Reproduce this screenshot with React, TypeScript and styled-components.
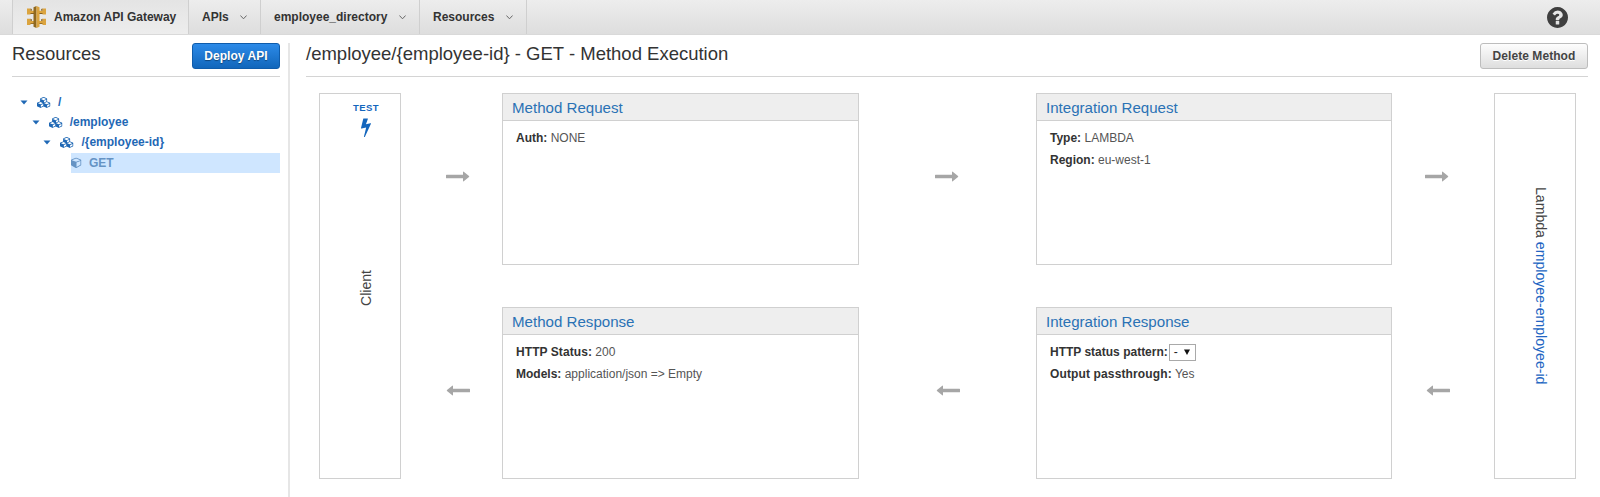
import React from "react";
import styled, { createGlobalStyle } from "styled-components";

const GlobalStyle = createGlobalStyle`
  *, *::before, *::after { box-sizing: border-box; }
  html, body { margin: 0; padding: 0; background: #fff; }
  body {
    font-family: "Liberation Sans", Arial, Helvetica, sans-serif;
    font-size: 12px;
    line-height: 16px;
    color: #444;
    overflow: hidden;
  }
`;

const Page = styled.div`
  display: flex;
  flex-direction: column;
  width: 1600px;
  height: 497px;
`;

const NavBar = styled.nav`
  display: flex;
  flex: none;
  height: 35px;
  padding-left: 12px;
  background: linear-gradient(#ededed, #dedede 97%);
  border-bottom: 1px solid #d9d9d9;
`;

const NavItem = styled.div<{ $width: number; $active?: boolean }>`
  display: flex;
  align-items: center;
  justify-content: space-between;
  width: ${(p) => p.$width}px;
  padding: ${(p) => (p.$active ? "0 12px 0 14px" : "0 13px")};
  border-right: 1px solid #cfcfcf;
  border-left: ${(p) => (p.$active ? "1px solid #cfcfcf" : "none")};
  background: ${(p) => (p.$active ? "linear-gradient(#e4e4e4, #ededed)" : "none")};
  font-weight: bold;
  color: #333;
  white-space: nowrap;
`;

const HelpSlot = styled.div`
  display: flex;
  align-items: center;
  margin-left: auto;
  padding-right: 32px;
  color: #3f3f3f;
`;

const Body = styled.div`
  display: flex;
  flex: 1;
  padding: 8px 12px 0;
`;

const Sidebar = styled.aside`
  width: 278px;
  padding-right: 8px;
  border-right: 2px solid #e6e6e6;
`;

const Main = styled.main`
  flex: 1;
  padding-left: 16px;
`;

const PageHeader = styled.header`
  display: flex;
  justify-content: space-between;
  height: 34px;
  border-bottom: 1px solid #d4d4d4;
`;

const Title = styled.h1`
  margin: 0;
  font-size: 18.5px;
  font-weight: normal;
  line-height: 22px;
  color: #333;
  white-space: nowrap;
`;

const Button = styled.button<{ $primary?: boolean }>`
  height: 26px;
  width: ${(p) => (p.$primary ? 88 : 108)}px;
  padding: 0;
  border: 1px solid ${(p) => (p.$primary ? "#0f5cab" : "#bdbdbd")};
  border-radius: 3px;
  background: ${(p) =>
    p.$primary ? "linear-gradient(#2c8ae8, #1166bb)" : "linear-gradient(#fdfdfd, #dedede)"};
  color: ${(p) => (p.$primary ? "#fff" : "#444")};
  text-shadow: ${(p) => (p.$primary ? "0 1px 1px rgba(0,0,0,.4)" : "0 1px 0 #fff")};
  font: bold 12px/16px "Liberation Sans", Arial, sans-serif;
  letter-spacing: 0.06px;
`;

const Tree = styled.ul`
  list-style: none;
  margin: 15px 0 0;
  padding: 0;
  color: #1f68b5;
`;

const TreeRow = styled.li<{ $depth: number }>`
  display: flex;
  align-items: center;
  height: 20.2px;
  padding-left: ${(p) => 8 + p.$depth * 11.7}px;
  font-weight: bold;
`;

const TreeIcon = styled.span`
  display: flex;
  width: 21px;
`;

const CaretSlot = styled.span`
  display: flex;
  width: 17px;
`;

const SelectedRow = styled.li`
  display: flex;
  align-items: center;
  height: 20px;
  margin-left: 59px;
  background: #cfe6ff;
  color: #6593c4;
  font-weight: bold;
  gap: 7px;
`;

const Flow = styled.section`
  display: grid;
  grid-template-columns: 82px 101px 357px 177px 356px 102px 82px;
  grid-template-rows: 172px 172px;
  grid-template-areas:
    "client a1 request a2 integration a3 backend"
    "client b1 response b2 result b3 backend";
  row-gap: 42px;
  padding: 16px 0 0 13px;
`;

const Endpoint = styled.div<{ $area: string }>`
  grid-area: ${(p) => p.$area};
  display: flex;
  flex-direction: column;
  align-items: center;
  padding: 7px 0 0 12px;
  border: 1px solid #d0d0d0;
  font-size: 14px;
`;

const TestLink = styled.a`
  display: flex;
  flex-direction: column;
  align-items: center;
  gap: 2px;
  font-size: 9.5px;
  line-height: 14px;
  letter-spacing: 0.4px;
  font-weight: bold;
  color: #1466bd;
`;

const VerticalText = styled.div<{ $up?: boolean; $top: number }>`
  writing-mode: vertical-rl;
  transform: ${(p) => (p.$up ? "rotate(180deg)" : "none")};
  margin-top: ${(p) => p.$top}px;
  font-size: 14.1px;
  line-height: 16px;
  white-space: nowrap;
`;

const Link = styled.a`
  color: #2265c2;
`;

const ArrowCell = styled.div<{ $area: string; $left: number }>`
  grid-area: ${(p) => p.$area};
  display: flex;
  align-items: center;
  padding: 0 0 5px ${(p) => p.$left}px;
`;

const Panel = styled.article<{ $area: string }>`
  grid-area: ${(p) => p.$area};
  border: 1px solid #d0d0d0;
`;

const PanelTitle = styled.h2`
  height: 27px;
  margin: 0;
  padding-left: 9px;
  border-bottom: 1px solid #d0d0d0;
  background: #eee;
  font-size: 15.1px;
  font-weight: normal;
  line-height: 27px;
  color: #2a72b5;
`;

const Fields = styled.div`
  padding: 6px 13px;
`;

const Field = styled.div`
  display: flex;
  align-items: center;
  height: 22px;
  color: #555;
  white-space: pre;
`;

const FieldLabel = styled.b<{ $tracking: number }>`
  color: #333;
  letter-spacing: ${(p) => p.$tracking}px;
`;

const SelectBox = styled.span`
  display: flex;
  align-items: center;
  justify-content: space-between;
  width: 27px;
  height: 17px;
  margin-left: 1px;
  padding: 0 5px 0 4px;
  border: 1px solid #a9a9a9;
  background: #fff;
  color: #222;
`;

const Caret = () => (
  <svg width="8" height="5" viewBox="0 0 8 5"><path d="M.5.5h7L4 4.500z" fill="currentColor" /></svg>
);

const Chevron = () => (
  <svg width="7" height="5" viewBox="0 0 7 5"><path d="M.4.5 3.500 3.800 6.600.5" fill="none" stroke="#666" /></svg>
);

const Cubes = () => (
  <svg width="14" height="11" viewBox="0 0 2304 1792">
    <path fill="currentColor" d="M640 1632l384-192v-314l-384 164v342zm-64-454l404-173-404-173-404 173zm1088 454l384-192v-314l-384 164v342zm-64-454l404-173-404-173-404 173zm-448-293l384-165v-266l-384 164v267zm-64-379l441-189-441-189-441 189zm1088 518v416q0 36-19 67t-52 47l-448 224q-25 14-57 14t-57-14l-448-224q-4-2-7-4-2 2-7 4l-448 224q-25 14-57 14t-57-14l-448-224q-33-16-52-47t-19-67v-416q0-38 21.500-70t56.500-48l434-186v-400q0-38 21.500-70t56.500-48l448-192q23-10 50-10t50 10l448 192q35 16 56.500 48t21.500 70v400l434 186q36 16 57 48t21 70z" />
  </svg>
);

const Cube = () => (
  <svg width="11" height="11" viewBox="0 0 1792 1792">
    <path fill="currentColor" d="M896 1629l640-349v-636l-640 233v752zm-64-865l698-254-698-254-698 254zm832-252v768q0 35-18 65t-49 47l-704 384q-28 16-61 16t-61-16l-704-384q-31-17-49-47t-18-65v-768q0-40 23-73t61-47l704-256q22-8 44-8t44 8l704 256q38 14 61 47t23 73z" />
  </svg>
);

const Bolt = () => (
  <svg width="20" height="20" viewBox="0 0 1792 1792">
    <path fill="currentColor" d="M1333 566q18 20 7 44l-540 1157q-13 25-42 25-4 0-14-2-17-5-25.500-19t-4.500-30l197-808-406 101q-4 1-12 1-18 0-31-11-18-15-13-39l201-825q4-14 16-23t28-9h328q19 0 32 12.500t13 29.500q0 8-5 18l-171 463 396-98q8-2 12-2 19 0 34 15z" />
  </svg>
);

const Help = () => (
  <svg width="21" height="21" viewBox="128 128 1536 1536">
    <path fill="currentColor" d="M1024 1376v-192q0-14-9-23t-23-9h-192q-14 0-23 9t-9 23v192q0 14 9 23t23 9h192q14 0 23-9t9-23zm256-672q0-88-55.500-163t-138.500-116-170-41q-243 0-371 213-15 24 8 42l132 100q7 6 19 6 16 0 25-12 53-68 86-92 34-24 86-24 48 0 85.500 26t37.500 59q0 38-20 61t-68 45q-63 28-115.500 86.500t-52.500 125.500v36q0 14 9 23t23 9h192q14 0 23-9t9-23q0-19 21.500-49.500t54.500-49.500q32-18 49-28.500t46-35 44.500-48 28-60.500 12.500-81zm384 192q0 209-103 385.500t-279.500 279.500-385.500 103-385.500-103-279.500-279.500-103-385.500 103-385.500 279.500-279.500 385.500-103 385.500 103 279.500 279.500 103 385.500z" />
  </svg>
);

const Arrow = ({ left = false }: { left?: boolean }) => (
  <svg width="24" height="11" viewBox="0 0 24 11">
    <path
      fill="#a6a6a6"
      transform={left ? "matrix(-1 0 0 1 24 0)" : undefined}
      d="M.5 3.700H17V1q0-.8.7-.3L23 5.100q.5.4 0 .8l-5.300 4.400q-.7.500-.7-.3V7.300H.5Q0 7.300 0 6.800V4.200q0-.5.5-.5z"
    />
  </svg>
);

const GatewayLogo = () => (
  <svg width="19" height="22" viewBox="0 0 19 22">
    <path fill="#876021" d="M0 6h7v2H0zM12 6h7v2h-7zM0 16h7v2H0zM12 16h7v2h-7z" />
    <path fill="#dba43f" d="M0 2.500h3.500v2.300H7V7H3.500v1.500H0zM19 2.500h-3.500v2.300H12V7h3.500v1.500H19zM0 12.800h3.500V15H7v2.200H3.500V19H0zM19 12.800h-3.500V15H12v2.200h3.500V19H19z" />
    <path fill="#876021" d="M3.500 2.500l1.300.5v1.800H3.500zM15.500 2.500l-1.300.5v1.800h1.300zM3.500 12.800l1.300.5V15H3.500zM15.500 12.800l-1.300.5V15h1.300z" />
    <path fill="#8f681f" d="M6.500 1.200L9.500 0v22l-3-1.200z" />
    <path fill="#dba43f" d="M9.500 0l3 1.200v19.600l-3 1.200z" />
  </svg>
);

const NavLabel = styled.span`
  width: 122px;
`;

type Entry = { label: string; value?: string; select?: boolean; tracking?: number };

const MethodPanel = ({ area, title, entries }: { area: string; title: string; entries: Entry[] }) => (
  <Panel $area={area}>
    <PanelTitle>{title}</PanelTitle>
    <Fields>
      {entries.map((e) => (
        <Field key={e.label}>
          <FieldLabel $tracking={e.tracking ?? 0}>{e.label}</FieldLabel>
          {e.value && <span> {e.value}</span>}
          {e.select && (
            <SelectBox>
              -
              <svg width="6" height="6" viewBox="0 0 6 6"><path d="M0 .5h6L3 6z" fill="#111" /></svg>
            </SelectBox>
          )}
        </Field>
      ))}
    </Fields>
  </Panel>
);

const resources = ["/", "/employee", "/{employee-id}"];

export default function App() {
  return (
    <Page>
      <GlobalStyle />
      <NavBar>
        <NavItem $width={177} $active>
          <GatewayLogo />
          <NavLabel>Amazon API Gateway</NavLabel>
        </NavItem>
        <NavItem $width={72}>APIs<Chevron /></NavItem>
        <NavItem $width={159}>employee_directory<Chevron /></NavItem>
        <NavItem $width={107}>Resources<Chevron /></NavItem>
        <HelpSlot><Help /></HelpSlot>
      </NavBar>
      <Body>
        <Sidebar>
          <PageHeader>
            <Title>Resources</Title>
            <Button $primary>Deploy API</Button>
          </PageHeader>
          <Tree>
            {resources.map((name, depth) => (
              <TreeRow key={name} $depth={depth}>
                <CaretSlot><Caret /></CaretSlot>
                <TreeIcon><Cubes /></TreeIcon>
                {name}
              </TreeRow>
            ))}
            <SelectedRow><Cube />GET</SelectedRow>
          </Tree>
        </Sidebar>
        <Main>
          <PageHeader>
            <Title>/employee/{"{employee-id}"} - GET - Method Execution</Title>
            <Button>Delete Method</Button>
          </PageHeader>
          <Flow>
            <Endpoint $area="client">
              <TestLink>TEST<Bolt /></TestLink>
              <VerticalText $up $top={133}>Client</VerticalText>
            </Endpoint>
            <ArrowCell $area="a1" $left={45}><Arrow /></ArrowCell>
            <MethodPanel area="request" title="Method Request" entries={[{ label: "Auth:", value: "NONE" }]} />
            <ArrowCell $area="a2" $left={76}><Arrow /></ArrowCell>
            <MethodPanel
              area="integration"
              title="Integration Request"
              entries={[{ label: "Type:", value: "LAMBDA" }, { label: "Region:", value: "eu-west-1" }]}
            />
            <ArrowCell $area="a3" $left={33}><Arrow /></ArrowCell>
            <Endpoint $area="backend">
              <VerticalText $top={86}>Lambda <Link>employee-employee-id</Link></VerticalText>
            </Endpoint>
            <ArrowCell $area="b1" $left={45}><Arrow left /></ArrowCell>
            <MethodPanel
              area="response"
              title="Method Response"
              entries={[
                { label: "HTTP Status:", value: "200", tracking: 0.07 },
                { label: "Models:", value: "application/json => Empty" },
              ]}
            />
            <ArrowCell $area="b2" $left={77}><Arrow left /></ArrowCell>
            <MethodPanel
              area="result"
              title="Integration Response"
              entries={[
                { label: "HTTP status pattern:", select: true },
                { label: "Output passthrough:", value: "Yes", tracking: 0.13 },
              ]}
            />
            <ArrowCell $area="b3" $left={34}><Arrow left /></ArrowCell>
          </Flow>
        </Main>
      </Body>
    </Page>
  );
}
